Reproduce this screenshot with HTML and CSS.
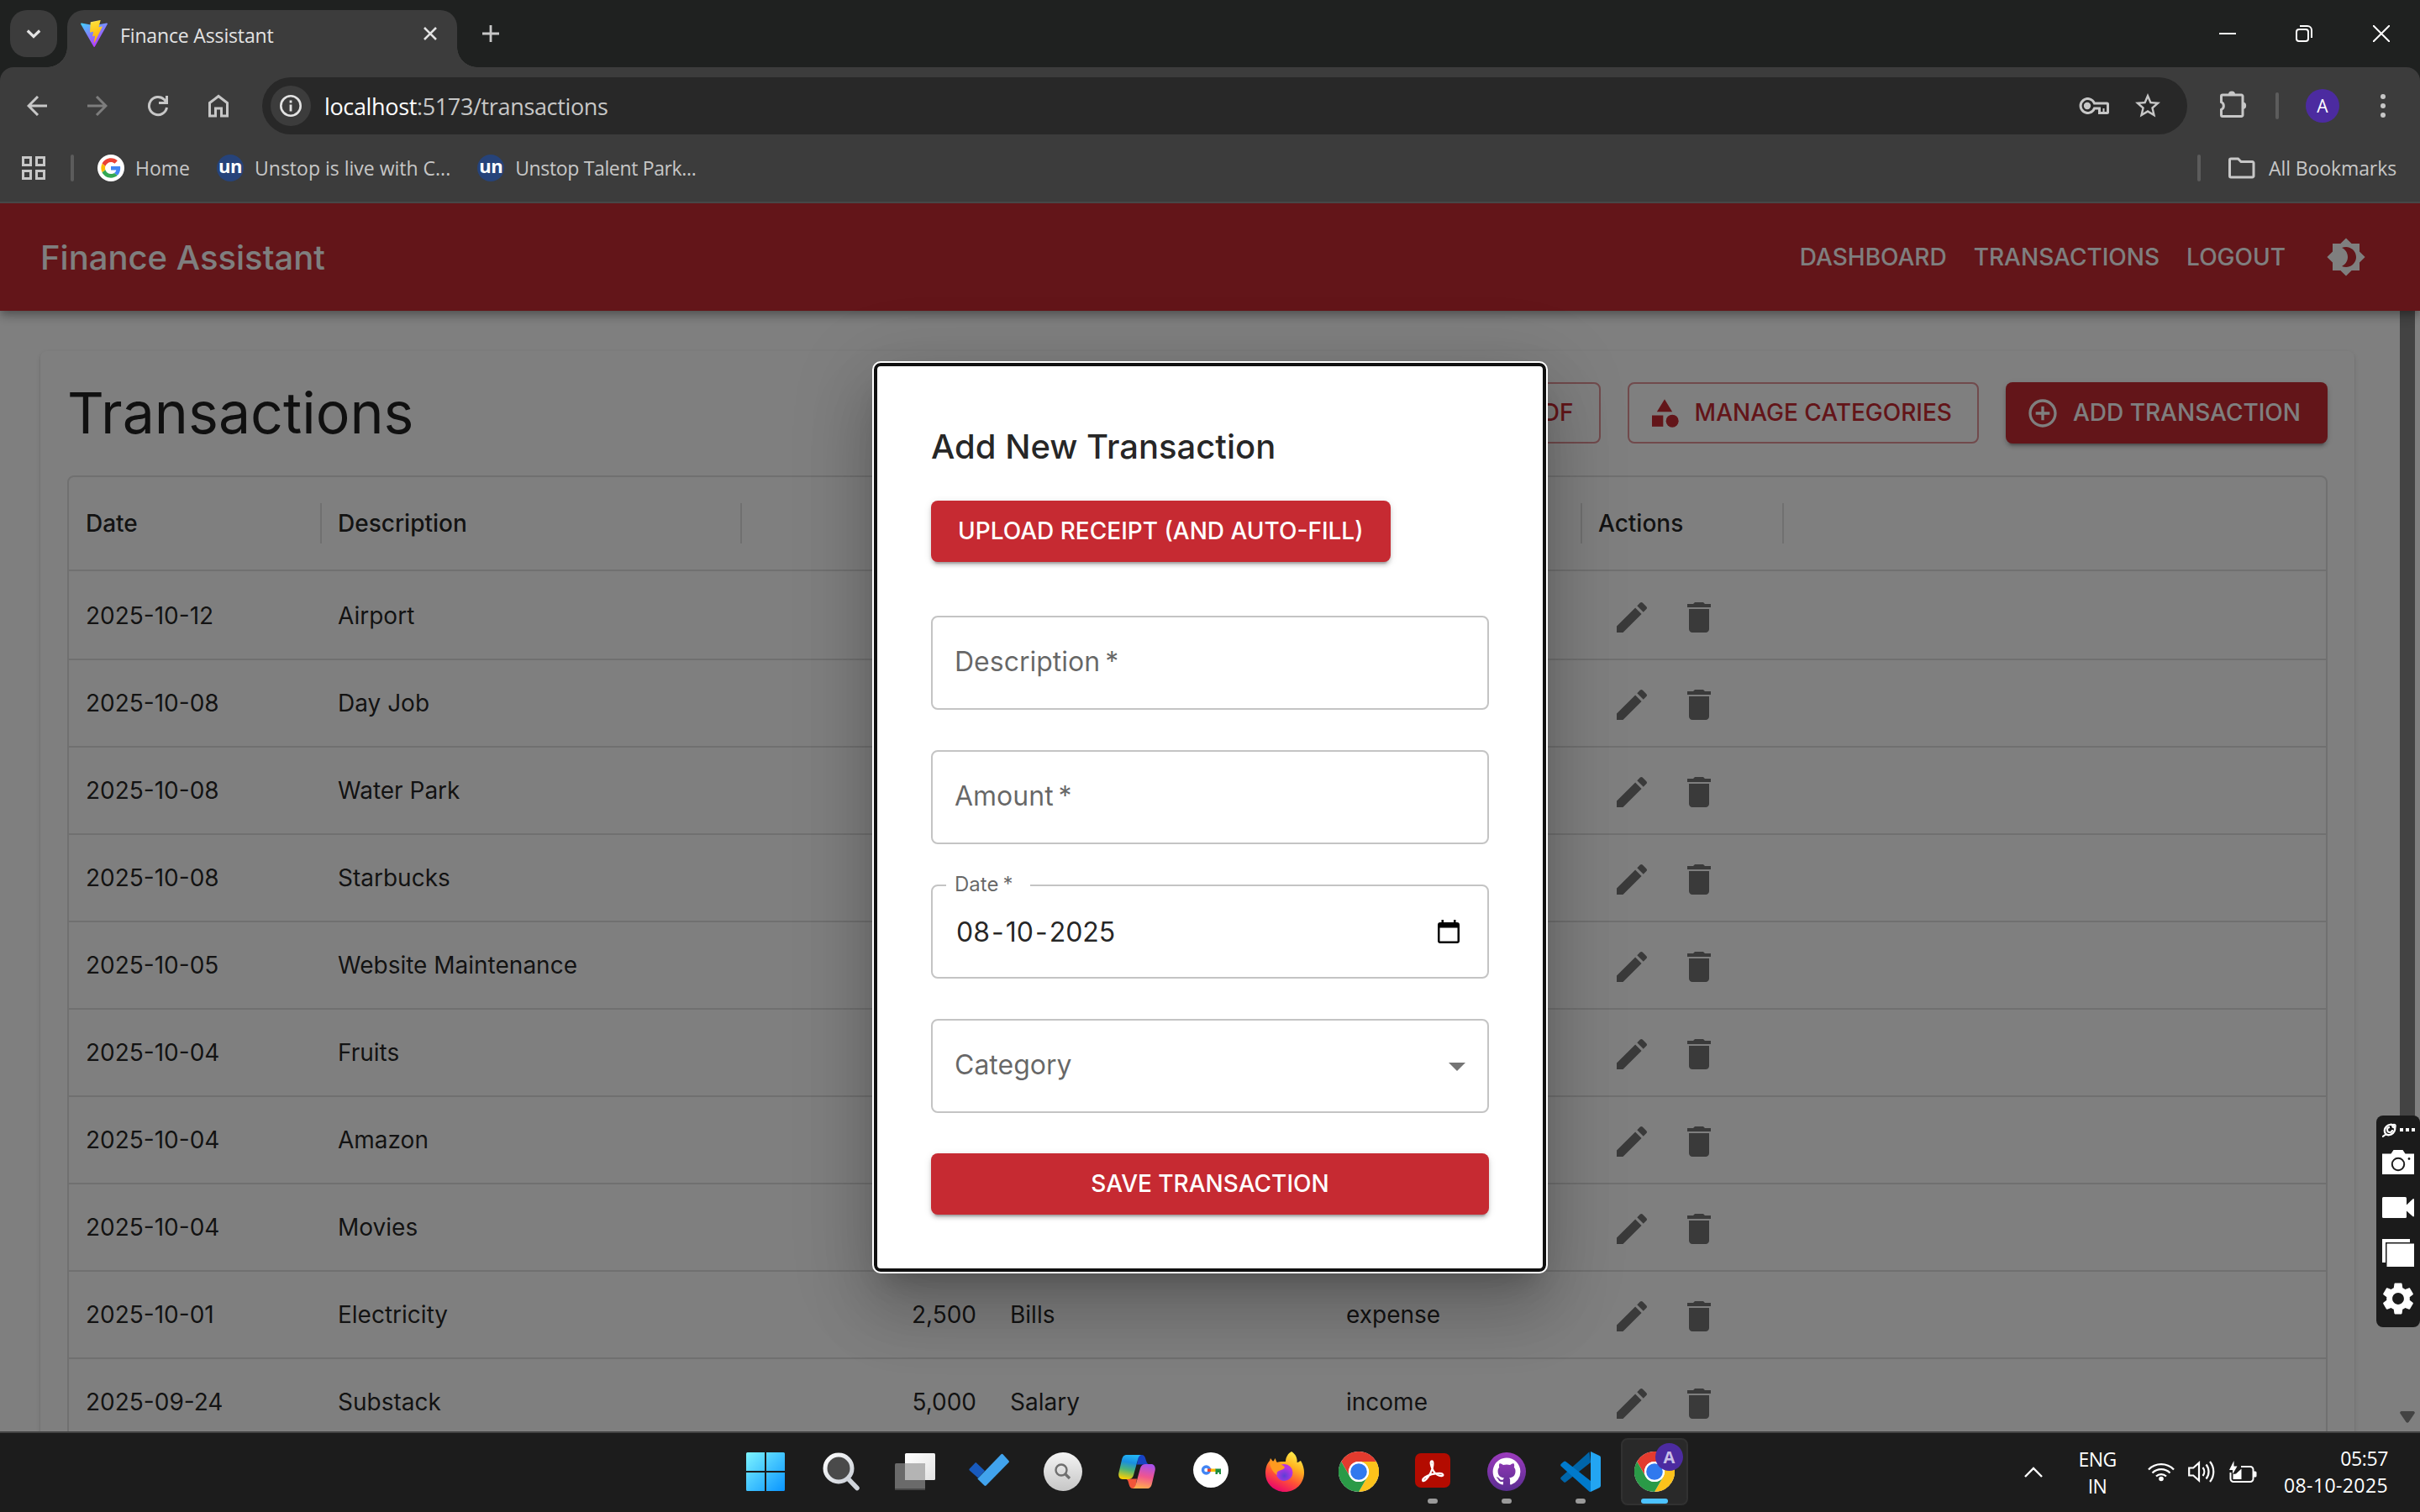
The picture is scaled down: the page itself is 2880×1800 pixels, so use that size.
FILE: index.html
```html
<!DOCTYPE html>
<html lang="en">
<head>
<meta charset="utf-8">
<title>Finance Assistant</title>
<link rel="stylesheet" href="styles.css">
</head>
<body>
<svg class="defs" aria-hidden="true">
  <defs>
    <symbol id="i-edit" viewBox="0 0 24 24"><path d="M3 17.25V21h3.75L17.81 9.94l-3.75-3.75L3 17.25zM20.71 7.04c.39-.39.39-1.02 0-1.41l-2.34-2.34c-.39-.39-1.02-.39-1.41 0l-1.83 1.83 3.75 3.75 1.83-1.83z"/></symbol>
    <symbol id="i-delete" viewBox="0 0 24 24"><path d="M6 19c0 1.1.9 2 2 2h8c1.1 0 2-.9 2-2V7H6v12zM19 4h-3.5l-1-1h-5l-1 1H5v2h14V4z"/></symbol>
    <symbol id="i-chrome" viewBox="0 0 48 48">
      <circle cx="24" cy="24" r="24" fill="#fff"/>
      <path fill="#e33b2e" d="M3.2 12A24 24 0 0 1 44.8 12H24A12 12 0 0 0 13.6 30z"/>
      <path fill="#fcc21b" d="M44.8 12A24 24 0 0 1 24 48L34.4 30A12 12 0 0 0 24 12z"/>
      <path fill="#2a9a47" d="M24 48A24 24 0 0 1 3.2 12L13.6 30A12 12 0 0 0 34.4 30z"/>
      <circle cx="24" cy="24" r="12" fill="#fff"/><circle cx="24" cy="24" r="9.8" fill="#3079ee"/>
    </symbol>
    <linearGradient id="g-vite" x1="0" y1="0" x2=".6" y2="1"><stop offset="0" stop-color="#41d1ff"/><stop offset="1" stop-color="#bd34fe"/></linearGradient>
    <linearGradient id="g-bolt" x1=".4" y1="0" x2=".6" y2="1"><stop offset="0" stop-color="#ffea83"/><stop offset=".1" stop-color="#ffdd35"/><stop offset="1" stop-color="#ffa800"/></linearGradient>
    <linearGradient id="g-win" gradientUnits="userSpaceOnUse" x1="0" y1="0" x2="46" y2="46"><stop offset="0" stop-color="#7df4ff"/><stop offset=".5" stop-color="#42c4ff"/><stop offset="1" stop-color="#0a95ff"/></linearGradient>
    <linearGradient id="g-lens" x1="0" y1="0" x2="1" y2="1"><stop offset="0" stop-color="#fff"/><stop offset="1" stop-color="#c9ced6"/></linearGradient>
    <linearGradient id="g-sheet" x1="0" y1="0" x2="1" y2="1"><stop offset="0" stop-color="#fff"/><stop offset="1" stop-color="#e2e2e2"/></linearGradient>
    <linearGradient id="g-disc" x1="0" y1="0" x2="0" y2="1"><stop offset="0" stop-color="#f4f4f4"/><stop offset="1" stop-color="#c6c6c6"/></linearGradient>
    <linearGradient id="g-cop1" x1=".5" y1="0" x2=".3" y2="1"><stop offset="0" stop-color="#22b5f5"/><stop offset=".3" stop-color="#1a8ee0"/><stop offset=".6" stop-color="#4bb37a"/><stop offset="1" stop-color="#ffd000"/></linearGradient>
    <linearGradient id="g-cop2" x1=".6" y1="0" x2=".4" y2="1"><stop offset="0" stop-color="#a750ea"/><stop offset=".5" stop-color="#f0558f"/><stop offset="1" stop-color="#ffac4d"/></linearGradient>
    <linearGradient id="g-fox" x1=".8" y1="0" x2=".3" y2="1"><stop offset="0" stop-color="#fff44f"/><stop offset=".35" stop-color="#ffb01f"/><stop offset=".65" stop-color="#ff5236"/><stop offset="1" stop-color="#e8006f"/></linearGradient>
    <radialGradient id="g-globe" cx=".5" cy=".7"><stop offset="0" stop-color="#5b3fd6"/><stop offset="1" stop-color="#b833e1"/></radialGradient>
    <linearGradient id="g-git" x1="0" y1="0" x2="0" y2="1"><stop offset="0" stop-color="#9c3bbd"/><stop offset="1" stop-color="#5a2d91"/></linearGradient>
  </defs>
</svg>

<div class="screen">
  <header class="browser">
    <div class="tabstrip">
      <div class="tab-search"><svg width="20" height="20" viewBox="0 0 20 20"><path d="M2.800 6.500 10 13.500l7.200-7" fill="none" stroke="#e3e3e3" stroke-width="3.200"/></svg></div>
      <div class="tab">
        <svg width="32" height="32" viewBox="0 0 256 257"><path fill="url(#g-vite)" d="M255.153 37.938L134.897 252.976c-2.483 4.44-8.862 4.466-11.382.048L.875 37.958c-2.746-4.814 1.371-10.646 6.827-9.67l120.385 21.517a6.537 6.537 0 0 0 2.322-.004l117.867-21.483c5.438-.991 9.574 4.796 6.877 9.62Z"/><path fill="url(#g-bolt)" d="M185.432.063L96.44 17.501a3.268 3.268 0 0 0-2.634 3.014l-5.474 92.456a3.268 3.268 0 0 0 3.997 3.378l24.777-5.718c2.318-.535 4.413 1.507 3.936 3.838l-7.361 36.047c-.495 2.426 1.782 4.5 4.151 3.78l15.304-4.649c2.372-.72 4.652 1.36 4.15 3.788l-11.698 56.621c-.732 3.542 3.979 5.473 5.943 2.437l1.313-2.028l72.516-144.72c1.215-2.423-.88-5.186-3.54-4.672l-25.505 4.922c-2.396.462-4.435-1.77-3.759-4.114l16.646-57.705c.677-2.35-1.37-4.583-3.769-4.113Z"/></svg>
        <span class="tab-title">Finance Assistant</span>
        <svg width="16" height="16" viewBox="0 0 16 16"><path d="M1 1l14 14M15 1L1 15" stroke="#e3e3e3" stroke-width="2.600"/></svg>
      </div>
      <svg class="new-tab" width="20" height="20" viewBox="0 0 20 20"><path d="M10 0v20M0 10h20" stroke="#c7c7c7" stroke-width="2.800"/></svg>
      <div class="window-controls">
        <svg class="minimize" width="20" height="20" viewBox="0 0 20 20"><path d="M0 10h20" stroke="#fff" stroke-width="2"/></svg>
        <svg width="20" height="20" viewBox="0 0 20 20" fill="none" stroke="#fff" stroke-width="2"><rect x="1" y="5" width="14" height="14" rx="3"/><path d="M5 1h9a5 5 0 0 1 5 5v9"/></svg>
        <svg width="20" height="20" viewBox="0 0 20 20"><path d="M0 0l20 20M20 0L0 20" stroke="#fff" stroke-width="2"/></svg>
      </div>
    </div>

    <div class="toolbar">
      <div class="nav-btn"><svg width="24" height="24" viewBox="0 0 24 24" fill="none" stroke="#c7c7c7" stroke-width="3"><path d="M24 12H2M13 1 2 12l11 11"/></svg></div>
      <div class="nav-btn"><svg width="24" height="24" viewBox="0 0 24 24" fill="none" stroke="#7d7d7d" stroke-width="3"><path d="M0 12h22M11 1l11 11-11 11"/></svg></div>
      <div class="nav-btn"><svg width="26" height="26" viewBox="0 0 26 26" fill="none" stroke="#c7c7c7" stroke-width="3"><path d="M23.500 15A10.600 10.600 0 1 1 20.500 5.500L23 8.500M23.500 1v8.500h-9.500"/></svg></div>
      <div class="nav-btn"><svg width="26" height="28" viewBox="0 0 26 28" fill="none" stroke="#c7c7c7" stroke-width="3"><path d="M2.500 10.500 13 2.500l10.500 8v15.500h-7v-9h-7v9h-7z"/></svg></div>
      <div class="omnibox">
        <div class="site-info"><svg width="26" height="26" viewBox="0 0 26 26"><circle cx="13" cy="13" r="11.700" fill="none" stroke="#e3e3e3" stroke-width="2.600"/><path d="M13 11.500v8M13 6.500v3" stroke="#e3e3e3" stroke-width="2.800"/></svg></div>
        <span class="url"><b>localhost</b>:5173/transactions</span>
        <svg class="key" width="36" height="20" viewBox="0 0 36 20" fill="none" stroke="#c7c7c7" stroke-width="3"><path d="M18.500 7A8.500 8.500 0 1 0 18.500 13H24.500v5.500h9a1 1 0 0 0 1-1V8a1 1 0 0 0-1-1z"/><path d="M29.500 13v6" stroke-width="2"/><circle cx="10" cy="10" r="4.200" fill="#c7c7c7" stroke="none"/></svg>
        <svg width="36" height="36" viewBox="0 0 24 24" fill="#c7c7c7"><path d="M22 9.240l-7.190-.62L12 2 9.190 8.630 2 9.240l5.460 4.730L5.820 21 12 17.270 18.180 21l-1.630-7.030L22 9.240zM12 15.400l-3.760 2.270 1-4.280-3.320-2.880 4.380-.38L12 6.100l1.710 4.040 4.380.38-3.320 2.880 1 4.280L12 15.400z"/></svg>
      </div>
      <div class="nav-btn ext"><svg width="34" height="34" viewBox="0 0 34 34"><path d="M2.500 7.500a1.500 1.500 0 0 1 1.500-1.500h22.500a1.500 1.500 0 0 1 1.500 1.500v22.500a1.500 1.500 0 0 1-1.500 1.500H4a1.500 1.500 0 0 1-1.500-1.500v-6.500a5 5 0 0 0 0-9z" fill="none" stroke="#c7c7c7" stroke-width="3"/><path d="M11 5.500a4 4 0 0 1 8 0zM28.500 14.500a4.300 4.300 0 0 1 0 8.500z" fill="#c7c7c7"/></svg></div>
      <i class="divider"></i>
      <div class="avatar">A</div>
      <div class="nav-btn menu"><svg width="8" height="28" viewBox="0 0 8 28" fill="#c7c7c7"><circle cx="4" cy="3" r="3"/><circle cx="4" cy="14" r="3"/><circle cx="4" cy="25" r="3"/></svg></div>
    </div>

    <div class="bookmarks">
      <svg class="apps" width="28" height="28" viewBox="0 0 28 28" fill="none" stroke="#c7c7c7" stroke-width="3"><path d="M1.500 1.500h9v9h-9zM17.500 1.500h9v9h-9zM1.500 17.500h9v9h-9zM17.500 17.500h9v9h-9z"/></svg>
      <i class="divider"></i>
      <div class="bookmark">
        <svg width="32" height="32" viewBox="0 0 32 32"><circle cx="16" cy="16" r="16" fill="#fff"/><g transform="translate(4.300 4.300) scale(.4875)"><path fill="#ea4335" d="M24 9.500c3.540 0 6.710 1.220 9.210 3.600l6.850-6.850C35.900 2.380 30.470 0 24 0 14.620 0 6.510 5.380 2.560 13.220l7.980 6.190C12.430 13.720 17.740 9.500 24 9.500z"/><path fill="#4285f4" d="M46.980 24.550c0-1.570-.15-3.090-.38-4.550H24v9.020h12.940c-.58 2.960-2.260 5.480-4.780 7.180l7.730 6c4.510-4.180 7.090-10.360 7.090-17.650z"/><path fill="#fbbc05" d="M10.530 28.590c-.48-1.450-.76-2.990-.76-4.590s.27-3.140.76-4.590l-7.980-6.190C.92 16.460 0 20.120 0 24c0 3.880.92 7.540 2.560 10.780l7.970-6.190z"/><path fill="#34a853" d="M24 48c6.480 0 11.930-2.130 15.890-5.810l-7.730-6c-2.150 1.450-4.920 2.300-8.160 2.300-6.260 0-11.570-4.220-13.470-9.910l-7.980 6.190C6.510 42.620 14.620 48 24 48z"/></g></svg>
        <span>Home</span>
      </div>
      <div class="bookmark"><span class="un">un</span><span>Unstop is live with C...</span></div>
      <div class="bookmark tight"><span class="un">un</span><span>Unstop Talent Park...</span></div>
      <div class="all-bookmarks">
        <i class="divider"></i>
        <svg width="34" height="26" viewBox="0 0 34 26" fill="none" stroke="#c7c7c7" stroke-width="3"><path d="M2.500 3.500a1.500 1.500 0 0 1 1.500-1.500h8.500l3.500 3.500h13.500a1.500 1.500 0 0 1 1.500 1.500v15.500a1.500 1.500 0 0 1-1.500 1.500H4a1.500 1.500 0 0 1-1.500-1.500z"/></svg>
        <span>All Bookmarks</span>
      </div>
    </div>
  </header>

  <div class="viewport">
    <div class="appbar">
      <span class="brand">Finance Assistant</span>
      <nav>
        <a>Dashboard</a>
        <a>Transactions</a>
        <a>Logout</a>
      </nav>
      <svg class="theme" width="48" height="48" viewBox="0 0 24 24" fill="#fff"><path d="M20 8.690V4h-4.690L12 .69 8.690 4H4v4.690L.69 12 4 15.310V20h4.690L12 23.310 15.310 20H20v-4.690L23.310 12 20 8.690zM12 18c-.89 0-1.740-.2-2.500-.55C11.560 16.500 13 14.420 13 12s-1.440-4.500-3.500-5.450C10.260 6.200 11.110 6 12 6c3.310 0 6 2.690 6 6s-2.690 6-6 6z"/></svg>
    </div>

    <div class="page">
      <main class="paper">
        <div class="title-row">
          <h1>Transactions</h1>
          <div class="actions">
            <button class="btn outlined pdf">PDF</button>
            <button class="btn outlined"><svg width="40" height="40" viewBox="0 0 24 24" fill="currentColor"><path d="m12 2-5.500 9h11z"/><circle cx="17.500" cy="17.500" r="4.500"/><path d="M3 13.500h8v8H3z"/></svg><span>Manage Categories</span></button>
            <button class="btn contained"><svg width="40" height="40" viewBox="0 0 24 24" fill="currentColor"><path d="M13 7h-2v4H7v2h4v4h2v-4h4v-2h-4V7zm-1-5C6.480 2 2 6.480 2 12s4.480 10 10 10 10-4.480 10-10S17.520 2 12 2zm0 18c-4.410 0-8-3.590-8-8s3.590-8 8-8 8 3.590 8 8-3.590 8-8 8z"/></svg><span>Add Transaction</span></button>
          </div>
        </div>

        <div class="grid">
          <div class="row head"><div>Date</div><div>Description</div><div></div><div></div><div></div><div>Actions</div></div>
          <div class="row"><div>2025-10-12</div><div>Airport</div><div></div><div></div><div></div><div><svg><use href="#i-edit"/></svg><svg><use href="#i-delete"/></svg></div></div>
          <div class="row"><div>2025-10-08</div><div>Day Job</div><div></div><div></div><div></div><div><svg><use href="#i-edit"/></svg><svg><use href="#i-delete"/></svg></div></div>
          <div class="row"><div>2025-10-08</div><div>Water Park</div><div></div><div></div><div></div><div><svg><use href="#i-edit"/></svg><svg><use href="#i-delete"/></svg></div></div>
          <div class="row"><div>2025-10-08</div><div>Starbucks</div><div></div><div></div><div></div><div><svg><use href="#i-edit"/></svg><svg><use href="#i-delete"/></svg></div></div>
          <div class="row"><div>2025-10-05</div><div>Website Maintenance</div><div></div><div></div><div></div><div><svg><use href="#i-edit"/></svg><svg><use href="#i-delete"/></svg></div></div>
          <div class="row"><div>2025-10-04</div><div>Fruits</div><div></div><div></div><div></div><div><svg><use href="#i-edit"/></svg><svg><use href="#i-delete"/></svg></div></div>
          <div class="row"><div>2025-10-04</div><div>Amazon</div><div></div><div></div><div></div><div><svg><use href="#i-edit"/></svg><svg><use href="#i-delete"/></svg></div></div>
          <div class="row"><div>2025-10-04</div><div>Movies</div><div></div><div></div><div></div><div><svg><use href="#i-edit"/></svg><svg><use href="#i-delete"/></svg></div></div>
          <div class="row"><div>2025-10-01</div><div>Electricity</div><div>2,500</div><div>Bills</div><div>expense</div><div><svg><use href="#i-edit"/></svg><svg><use href="#i-delete"/></svg></div></div>
          <div class="row"><div>2025-09-24</div><div>Substack</div><div>5,000</div><div>Salary</div><div>income</div><div><svg><use href="#i-edit"/></svg><svg><use href="#i-delete"/></svg></div></div>
        </div>
      </main>
      <div class="scrollbar"><i class="thumb"></i><svg width="18" height="14" viewBox="0 0 18 14"><path d="M2 0h14a1.800 1.800 0 0 1 1.500 2.800l-7 10.200a1.800 1.800 0 0 1-3 0L.5 2.800A1.800 1.800 0 0 1 2 0z" fill="#868686"/></svg></div>
    </div>

    <div class="backdrop">
      <form class="modal">
        <h2>Add New Transaction</h2>
        <button type="button" class="btn contained upload">Upload Receipt (and auto-fill)</button>
        <div class="field"><span class="placeholder">Description<em>*</em></span></div>
        <div class="field"><span class="placeholder">Amount<em>*</em></span></div>
        <div class="field">
          <label>Date<em>*</em></label>
          <span class="value">08<i>-</i>10<i>-</i>2025</span>
          <svg class="calendar" width="26" height="28" viewBox="0 0 26 28"><path d="M4.500 0h2.500v3h12V0h2.500v3h1.500a3 3 0 0 1 3 3v19a3 3 0 0 1-3 3H3a3 3 0 0 1-3-3V6a3 3 0 0 1 3-3h1.500zM2.500 9.500v16h21v-16z" fill="#000"/></svg>
        </div>
        <div class="field"><span class="placeholder">Category</span><svg class="arrow" width="48" height="48" viewBox="0 0 24 24"><path d="M7 10l5 5 5-5z" fill="rgba(0,0,0,.54)"/></svg></div>
        <button type="button" class="btn contained save">Save Transaction</button>
      </form>
    </div>
  </div>

  <footer class="taskbar">
    <div class="apps-row">
      <div class="slot"><svg class="win" width="46" height="46" viewBox="0 0 46 46"><path fill="url(#g-win)" d="M1.500 0H22v22H0V1.500A1.500 1.500 0 0 1 1.500 0zM24 0h20.500A1.500 1.500 0 0 1 46 1.500V22H24zM0 24h22v22H1.500A1.500 1.500 0 0 1 0 44.500zM24 24h22v20.500a1.500 1.500 0 0 1-1.500 1.500H24z"/></svg></div>
      <div class="slot"><svg width="46" height="46" viewBox="0 0 46 46"><path d="M31 31l11 11.500" stroke="#d0d5dc" stroke-width="5.500" stroke-linecap="round"/><circle cx="20" cy="19" r="16" fill="#4a4a4a" stroke="url(#g-lens)" stroke-width="5"/></svg></div>
      <div class="slot"><svg width="48" height="44" viewBox="0 0 48 44"><rect x="12" width="36" height="32" rx="1.500" fill="url(#g-sheet)"/><rect y="12" width="36" height="32" rx="1.500" fill="#6a6a6a"/><path d="M12 12h24v20H12z" fill="#b4b4b4"/><path d="M0 42h36v.5a1.500 1.500 0 0 1-1.500 1.500h-33A1.500 1.500 0 0 1 0 42.500z" fill="#474747"/></svg></div>
      <div class="slot"><svg class="up" width="48" height="40" viewBox="0 0 48 40"><path d="M9 11.500 19 21 11 29.500.8 20.500a1.500 1.500 0 0 1 0-2L7.500 11.500a1 1 0 0 1 1.500 0z" fill="#185abd"/><path d="M38.500 1.300a1.500 1.500 0 0 1 2 0L47.500 9a1.500 1.500 0 0 1 0 2L20.500 38.500a1.500 1.500 0 0 1-2 0L10.300 30.500z" fill="#41a3ed"/></svg></div>
      <div class="slot"><svg width="46" height="46" viewBox="0 0 46 46"><circle cx="23" cy="23" r="23" fill="url(#g-disc)"/><circle cx="21" cy="21" r="6.500" fill="none" stroke="#6f6f6f" stroke-width="2.400"/><path d="M26 26l5 5" stroke="#6f6f6f" stroke-width="3.200"/></svg></div>
      <div class="slot"><svg width="44" height="40" viewBox="0 0 44 40"><path d="M24 0h4c3 0 4 3 5 7 1 3 2 4 4 4.500H22z" fill="#1743c4"/><path d="M20 40h-3c-3 0-4-3-5-7-.8-3-1.500-4-4-4.500h14z" fill="#f2553a"/><path d="M10 0h18c-3 0-4 2.500-5 6l-5 18c-1 3.500-3 5-6.500 5H5c-4 0-5.500-4-4.500-8L4 6C5 2 6.500 0 10 0z" fill="url(#g-cop1)"/><path d="M34 40H16c3 0 4-2.500 5-6l5-18c1-3.500 3-5 6.500-5H39c4 0 5.500 4 4.500 8l-3.500 15c-1 4-2.500 6-6 6z" fill="url(#g-cop2)"/></svg></div>
      <div class="slot"><svg class="up" width="42" height="42" viewBox="0 0 42 42"><circle cx="21" cy="21" r="21" fill="#fff"/><circle cx="15.500" cy="21" r="4" fill="none" stroke="#4285f4" stroke-width="3.400"/><path d="M17 19.500h5v3.500h-5z" fill="#ea4335"/><path d="M21 19.500h6v3.500h-6z" fill="#fbbc05"/><path d="M26.500 19.500H33V26h-2v-2h-2v2h-2.500z" fill="#1e8e3e"/></svg></div>
      <div class="slot"><svg width="46" height="48" viewBox="0 0 46 48"><path d="M31 0c6 4 7 9 6.500 13 2 0 3-1.500 4.500-2 3 5 4 10 4 14 0 13-10 23-23 23S0 38 0 26C0 19 2 14 5 11l1-3 3 4c1-1 1.500-2 2.500-4l2 5c5-1 8-1 10.500-1 0-5 3-10 7-12z" fill="url(#g-fox)"/><circle cx="22.500" cy="25" r="10" fill="url(#g-globe)"/><path d="M5 12c4-1 8 0 11 2 3 1.500 6 3 7 5-2 3-5 3-7 4-2 1-3 2-2 5-4-2-9-9-9-16z" fill="#ff9a1f"/></svg></div>
      <div class="slot"><svg width="48" height="48"><use href="#i-chrome"/></svg></div>
      <div class="slot dot"><svg class="up" width="42" height="41" viewBox="0 0 42 41"><rect width="42" height="41" rx="7" fill="#b30b00"/><path d="M20 9.500c-2.500 0-1 6 1.500 11 2.500 4.500 7 7 10.500 6.500 2.500-.6 1.500-3-2.500-3-6 0-13 1.500-17.500 4.500-3.500 2.500-3.500 5-1.500 4.500 3-1 8-8 10-14.500 1-4 1.500-9-.5-9z" fill="none" stroke="#fff" stroke-width="2.300"/></svg></div>
      <div class="slot dot"><svg width="46" height="46" viewBox="0 0 46 46"><circle cx="23" cy="23" r="23" fill="url(#g-git)"/><path transform="translate(6.600 6.600) scale(2.050)" fill="#fff" d="M8 0C3.580 0 0 3.580 0 8c0 3.540 2.290 6.530 5.470 7.590.4.07.55-.17.55-.38 0-.19-.01-.82-.01-1.490-2.010.37-2.530-.49-2.690-.94-.09-.23-.48-.94-.82-1.130-.28-.15-.68-.52-.01-.53.63-.01 1.080.58 1.230.82.72 1.210 1.870.87 2.330.66.07-.52.28-.87.51-1.070-1.780-.2-3.640-.89-3.640-3.950 0-.87.31-1.590.82-2.150-.08-.2-.36-1.020.08-2.120 0 0 .67-.21 2.200.82.64-.18 1.320-.27 2-.27.68 0 1.360.09 2 .27 1.530-1.040 2.200-.82 2.200-.82.44 1.100.16 1.920.08 2.120.51.56.82 1.270.82 2.150 0 3.070-1.870 3.750-3.650 3.950.29.25.54.73.54 1.480 0 1.070-.01 1.930-.01 2.200 0 .21.15.46.55.38A8.013 8.013 0 0016 8c0-4.420-3.580-8-8-8z"/></svg></div>
      <div class="slot dot"><svg width="48" height="48" viewBox="0 0 48 48"><path d="M.8 30.500 34.500.300 36 13 6.500 36.200a2 2 0 0 1-2.500 0L.8 33.200a2 2 0 0 1 0-2.700z" fill="#0065a9"/><path d="M.8 14.800 4 11.900a2 2 0 0 1 2.500 0L36 35v13l-1.500-.2L.8 17.500a2 2 0 0 1 0-2.700z" fill="#007acc"/><path d="M36 0l10.500 5A2.500 2.500 0 0 1 48 7.200v33.600a2.500 2.500 0 0 1-1.500 2.200L36 48z" fill="#23a5f2"/></svg></div>
      <div class="slot active"><div class="tile"><svg width="48" height="48"><use href="#i-chrome"/></svg><b>A</b></div></div>
    </div>
    <div class="tray">
      <svg width="22" height="13" viewBox="0 0 22 13"><path d="M1 12 11 2l10 10" fill="none" stroke="#fff" stroke-width="2.400"/></svg>
      <div class="lang"><span>ENG</span><span>IN</span></div>
      <svg class="wifi" width="32" height="24" viewBox="0 0 32 24" fill="none" stroke="#fff" stroke-width="2.300"><path d="M1 9.500a21 21 0 0 1 30 0M5.500 13.500a15 15 0 0 1 21 0M10 17.500a8.600 8.600 0 0 1 12 0"/><circle cx="16" cy="20.500" r="2.800" fill="#fff" stroke="none"/></svg>
      <svg class="speaker" width="33" height="28" viewBox="0 0 33 28" fill="none" stroke="#fff" stroke-width="2.200"><path d="M1.200 9.500h5L13 3.500v21l-6.800-6H1.200zM17.500 9a8 8 0 0 1 0 10M21.500 5.500a13.500 13.500 0 0 1 0 17M26 2a19 19 0 0 1 0 24"/></svg>
      <svg class="battery" width="33" height="27" viewBox="0 0 33 27"><path d="M14 7h11a3.500 3.500 0 0 1 3.500 3.500v11A3.500 3.500 0 0 1 25 25H5a3.500 3.500 0 0 1-3.500-3.500V14" fill="none" stroke="#fff" stroke-width="2"/><path d="M29 12.500h2a1.500 1.500 0 0 1 1.500 1.500v4a1.500 1.500 0 0 1-1.500 1.500h-2zM4.500 22v-6l3.500-.5L14.500 9.500V22zM5.500 0v6.500H9.500L4 16v-5H0z" fill="#fff"/></svg>
      <div class="clock"><span class="time">05:57</span><span class="date">08-10-2025</span></div>
    </div>
  </footer>

  <aside class="recorder">
    <div class="grip"><svg width="18" height="18" viewBox="0 0 18 18" fill="none" stroke="#fff" stroke-width="2.400"><ellipse cx="9" cy="9" rx="6.800" ry="5.500" transform="rotate(-45 9 9)"/><path d="M0 17.500 5 14M12 9a3 3 0 1 1-3-3" stroke-width="2"/><circle cx="14" cy="4.500" r="2" stroke-width="1.500"/></svg><i></i><i></i><i></i></div>
    <svg class="camera" width="38" height="29" viewBox="0 0 38 29"><path d="M0 4.500h10.500L13.500 0h11l3 4.500H38V29H0z" fill="#fff"/><circle cx="19" cy="17" r="7.200" fill="#fff" stroke="#1b1b1b" stroke-width="2"/><circle cx="32" cy="10.500" r="1.400" fill="#1b1b1b"/></svg>
    <svg class="video" width="38" height="25" viewBox="0 0 38 25" fill="#fff"><rect width="29" height="25" rx="1.500"/><path d="M29 9.500 36.500 2.200H38v21h-1.500L29 16.500z"/></svg>
    <svg class="stack" width="38" height="33" viewBox="0 0 38 33" fill="#fff"><path d="M0 0h33v4H4v24H0z"/><path d="M5.500 5.500H38V33H5.500z"/></svg>
    <svg class="gear" width="46" height="46" viewBox="0 0 24 24" fill="#fff"><path d="M19.140 12.940c.04-.3.06-.61.06-.94 0-.32-.02-.64-.07-.94l2.030-1.580c.18-.14.23-.41.12-.61l-1.920-3.320c-.12-.22-.37-.29-.59-.22l-2.390.96c-.5-.38-1.030-.7-1.620-.94l-.36-2.540c-.04-.24-.24-.41-.48-.41h-3.840c-.24 0-.43.17-.47.41l-.36 2.540c-.59.24-1.130.57-1.620.94l-2.390-.96c-.22-.08-.47 0-.59.22L2.740 8.870c-.12.21-.08.47.12.61l2.030 1.580c-.05.3-.09.63-.09.94s.02.64.07.94l-2.030 1.580c-.18.14-.23.41-.12.61l1.920 3.320c.12.22.37.29.59.22l2.390-.96c.5.38 1.030.7 1.620.94l.36 2.540c.05.24.24.41.48.41h3.840c.24 0 .44-.17.47-.41l.36-2.540c.59-.24 1.130-.56 1.620-.94l2.390.96c.22.08.47 0 .59-.22l1.920-3.320c.12-.22.07-.47-.12-.61l-2.010-1.580zM12 15.600c-1.980 0-3.600-1.620-3.600-3.600s1.620-3.600 3.600-3.600 3.600 1.620 3.600 3.600-1.620 3.600-3.600 3.600z"/></svg>
  </aside>
</div>
</body>
</html>
```
FILE: styles.css
```css
* { box-sizing: border-box; }
html, body { margin: 0; height: 100%; }
body { font-family: Inter, "Noto Sans", sans-serif; background: #1c1c1c; }
svg { display: block; flex: none; }
i { font-style: normal; }
.defs { position: absolute; width: 0; height: 0; }
.screen { position: relative; width: 2880px; height: 1800px; display: flex; flex-direction: column; overflow: hidden; }

/* Browser frame */
.browser { height: 242px; flex: none; background: #1f2120; font-family: "Open Sans", "Noto Sans", sans-serif; color: #c7c7c7; }
.tabstrip { height: 80px; display: flex; align-items: center; padding-left: 12px; background: #1f2120; }
.tab-search { width: 56px; height: 56px; border-radius: 20px; background: #3c3c3c; display: grid; place-items: center; }
.tab { position: relative; align-self: flex-end; width: 464px; height: 68px; margin-left: 12px; padding: 0 24px 12px 16px; border-radius: 20px 20px 0 0; background: #3c3c3c; display: flex; align-items: center; }
.tab::before, .tab::after { content: ""; position: absolute; bottom: 0; width: 24px; height: 24px; }
.tab::before { right: 100%; background: radial-gradient(circle at 0 0, transparent 23.5px, #3c3c3c 24px); }
.tab::after { left: 100%; background: radial-gradient(circle at 100% 0, transparent 23.5px, #3c3c3c 24px); }
.tab-title { margin-left: 15px; padding-top: 3px; flex: 1; font-size: 23px; letter-spacing: -.15px; color: #e3e3e3; }
.new-tab { margin-left: 30px; }
.window-controls { margin-left: auto; display: flex; gap: 72px; padding-right: 36px; }
.minimize { margin-right: -1px; }
.toolbar { height: 92px; display: flex; align-items: center; padding: 0 8px; background: #3c3c3c; border-radius: 16px 16px 0 0; }
.nav-btn { width: 72px; display: grid; place-items: center; flex: none; }
.omnibox { flex: none; width: 2291px; height: 68px; margin-left: 16px; padding: 0 29px 0 10px; border-radius: 34px; background: #282828; display: flex; align-items: center; }
.site-info { width: 48px; height: 48px; border-radius: 50%; background: #3c3c3c; display: grid; place-items: center; }
.url { flex: 1; margin-left: 16px; font-size: 27px; letter-spacing: -.35px; }
.url b { font-weight: 400; color: #fff; }
.key { margin-right: 28px; }
.ext { margin-left: 19px; padding-bottom: 4px; }
.divider { width: 4px; height: 32px; border-radius: 2px; background: #5c5c5c; flex: none; }
.toolbar .divider { margin-left: 14px; }
.avatar { width: 40px; height: 40px; margin-left: 32px; border-radius: 50%; background: #4c2ba0; color: #fff; font-size: 21px; display: grid; place-items: center; }
.menu { margin-left: 16px; }
.bookmarks { height: 70px; padding: 0 28px 12px 26px; display: flex; align-items: center; background: #3c3c3c; border-bottom: 2px solid #474747; font-size: 23px; }
.bookmarks > .divider { margin: 0 28px 0 30px; }
.bookmark { display: flex; align-items: center; gap: 13px; margin-right: 32px; }
.tight { letter-spacing: -.35px; }
.un { width: 32px; height: 32px; border-radius: 50%; background: #26437a; color: #fff; font: 700 22px/27px "Open Sans", sans-serif; letter-spacing: -.5px; display: flex; justify-content: center; }
.all-bookmarks { margin-left: auto; display: flex; align-items: center; }
.all-bookmarks svg { margin: 0 15px 0 32px; }
.all-bookmarks span { letter-spacing: -.1px; }

/* Web page */
.viewport { position: relative; height: 1462px; flex: none; overflow: hidden; background: #fff; display: flex; flex-direction: column; color: rgba(0,0,0,.87); }
.appbar { position: relative; z-index: 1; height: 128px; flex: none; padding: 0 64px 0 48px; display: flex; align-items: center; background: #c62a32; color: #fff; box-shadow: 0 4px 8px -2px rgba(0,0,0,.2), 0 8px 10px rgba(0,0,0,.14), 0 2px 20px rgba(0,0,0,.12); }
.brand { flex: 1; font-size: 40px; font-weight: 500; }
.appbar nav { display: flex; gap: 32px; text-transform: uppercase; font-size: 28px; font-weight: 500; }
.theme { margin-left: 48px; }
.page { flex: 1; display: flex; min-height: 0; }
.paper { width: 2754px; height: 2000px; flex: none; margin: 48px 54px 0 48px; padding: 32px; border-radius: 8px; background: #fff; box-shadow: 0 4px 2px -2px rgba(0,0,0,.2), 0 2px 2px rgba(0,0,0,.14), 0 2px 6px rgba(0,0,0,.12); }
.title-row { height: 84px; margin-bottom: 32px; display: flex; align-items: flex-start; justify-content: space-between; }
h1 { margin: 0; font-size: 68px; font-weight: 400; line-height: 82px; }
.actions { display: flex; gap: 32px; padding-top: 5px; }
.btn { font: 500 28px/49px Inter, sans-serif; text-transform: uppercase; height: 73px; padding: 0 32px; border: 0; border-radius: 8px; display: flex; align-items: center; justify-content: center; }
.btn svg { margin: 0 16px 0 -8px; }
.contained { background: #c62a32; color: #fff; box-shadow: 0 6px 2px -4px rgba(0,0,0,.2), 0 4px 4px rgba(0,0,0,.14), 0 2px 10px rgba(0,0,0,.12); }
.outlined { background: none; color: #c62a32; border: 2px solid rgba(198,42,50,.5); padding: 0 30px; }
.pdf { width: 280px; justify-content: flex-end; }

.grid { border: 2px solid #e0e0e0; border-radius: 8px; font-size: 28px; }
.row { display: grid; grid-template-columns: 300px 500px 300px 400px 300px 240px; height: 104px; align-items: center; }
.row > div { padding: 0 20px; }
.row > div:nth-child(3) { text-align: right; }
.row + .row { border-top: 2px solid #e0e0e0; }
.row.head { height: 110px; font-weight: 500; }
.row.head > div { height: 48px; margin-right: -1px; line-height: 48px; border-right: 2px solid #e0e0e0; }
.row.head + .row { height: 106px; padding-top: 2px; }
.row > div:last-child { display: flex; }
.row:not(.head) > div:last-child { padding-top: 4px; }
.row svg { width: 80px; height: 48px; fill: rgba(0,0,0,.54); }
.scrollbar { width: 18px; height: 1334px; display: flex; flex-direction: column; justify-content: space-between; padding-bottom: 10px; }
.thumb { width: 18px; height: 1110px; background: #868686; }

/* Dialog */
.backdrop { position: absolute; inset: 0; z-index: 2; background: rgba(0,0,0,.5); display: flex; align-items: center; justify-content: center; }
.modal { width: 800px; height: 1082px; padding: 64px; border: 4px solid #101010; border-radius: 8px; background: #fff; outline: 2px solid #fff; display: flex; flex-direction: column; align-items: stretch; box-shadow: 0 22px 30px -14px rgba(0,0,0,.2), 0 48px 76px 6px rgba(0,0,0,.14), 0 18px 92px 16px rgba(0,0,0,.12); }
h2 { margin: 0 0 32px; font-size: 40px; line-height: 64px; font-weight: 500; }
.upload { align-self: flex-start; margin-bottom: 64px; }
.field { position: relative; height: 112px; margin-bottom: 48px; padding: 0 26px; border: 2px solid #c4c4c4; border-radius: 8px; display: flex; align-items: center; justify-content: space-between; font-size: 32px; color: rgba(0,0,0,.6); }
.placeholder { padding-bottom: 3px; }
.field em { font-style: normal; margin-left: 6px; }
.field label { position: absolute; left: 16px; top: -18px; padding: 0 20px 0 10px; width: 100px; background: #fff; font-size: 24px; line-height: 32px; white-space: nowrap; }
.field label em { margin-left: 5px; }
.value { color: rgba(0,0,0,.87); padding-left: 2px; }
.value i { padding: 0 2px; }
.calendar { margin-right: 7px; }
.arrow { margin-right: -14px; }

/* Taskbar */
.taskbar { height: 96px; border-top: 2px solid #434343; background: #1c1c1c; display: flex; justify-content: space-between; padding-left: 869px; font-family: "Open Sans", "Noto Sans", sans-serif; color: #fff; }
.apps-row { display: flex; height: 92px; }
.slot { position: relative; width: 88px; display: grid; place-items: center; }
.win { margin-right: 4px; }
.up { margin-bottom: 4px; }
.dot::after, .active::after { content: ""; position: absolute; left: 50%; top: 78px; width: 12px; height: 6px; margin-left: -6px; border-radius: 3px; background: #9a9a9a; }
.active::after { width: 32px; margin-left: -16px; background: #4cc2ff; }
.tile { position: relative; width: 80px; height: 80px; border-radius: 8px; background: #292929; border: 2px solid #313131; display: grid; place-items: center; }
.tile b { position: absolute; left: 39px; top: 4px; width: 33px; height: 33px; border-radius: 50%; background: #4c2ba0; color: #c9bfe6; font-size: 20px; line-height: 34px; text-align: center; }
.tray { display: flex; align-items: center; height: 92px; padding-right: 38px; }
.lang, .clock { display: flex; flex-direction: column; font-size: 23px; line-height: 32px; }
.lang { width: 44px; margin: 0 38px 0 43px; padding-top: 2px; align-items: center; letter-spacing: -.6px; }
.speaker { margin: 0 16px; }
.clock { width: 124px; margin-left: 32px; align-items: flex-end; }
.time { letter-spacing: -.4px; }
.date { letter-spacing: .4px; }

/* Recorder side panel */
.recorder { position: absolute; left: 2828px; top: 1328px; z-index: 3; width: 52px; height: 252px; padding-top: 8px; border-radius: 8px; background: #1b1b1b; display: flex; flex-direction: column; align-items: center; }
.grip { display: flex; align-items: center; gap: 2px; }
.grip i { width: 4px; height: 4px; background: #fff; margin-left: 1px; }
.camera { margin-top: 15px; }
.video { margin-top: 27px; }
.stack { margin-top: 25px; }
.gear { margin-top: 15px; }
```
